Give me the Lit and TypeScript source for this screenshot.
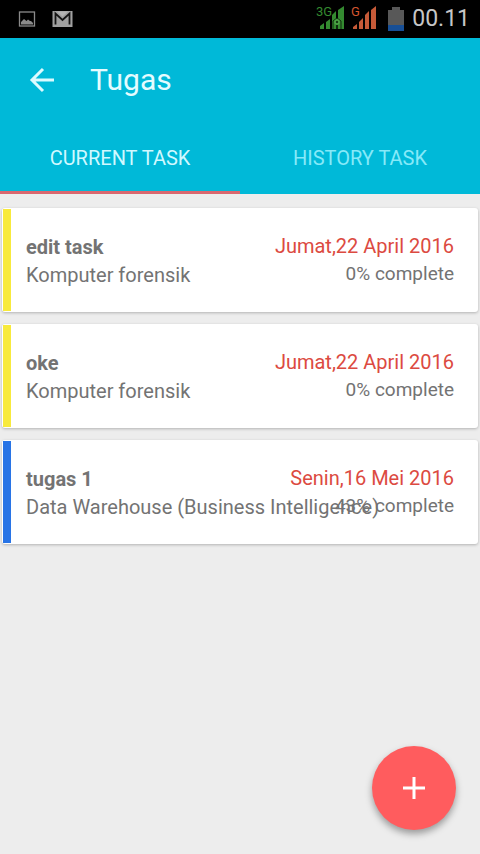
import { LitElement, html, css } from "lit";
import { customElement, property, state } from "lit/decorators.js";
import { classMap } from "lit/directives/class-map.js";

interface Task {
  title: string;
  course: string;
  due: string;
  progress: number;
  colour: "yellow" | "blue";
}

const TASKS: Task[] = [
  { title: "edit task", course: "Komputer forensik", due: "Jumat,22 April 2016", progress: 0, colour: "yellow" },
  { title: "oke", course: "Komputer forensik", due: "Jumat,22 April 2016", progress: 0, colour: "yellow" },
  { title: "tugas 1", course: "Data Warehouse (Business Intelligence)", due: "Senin,16 Mei 2016", progress: 43, colour: "blue" },
];

@customElement("status-bar")
class StatusBar extends LitElement {
  static styles = css`
    :host {
      display: flex;
      align-items: center;
      height: 38px;
      padding: 0 10px 0 18px;
      background: #000;
      color: #c6c6c6;
    }
    svg { display: block; }
    .notices { display: flex; align-items: center; gap: 16px; flex: 1; }
    .system { display: flex; align-items: center; }
    .signals { display: flex; gap: 6px; }
    .battery { margin: 0 8px 0 10px; }
    .net { font: 13px Roboto, sans-serif; }
    time { font: 23px/40px Roboto, sans-serif; }
  `;

  render() {
    return html`
      <div class="notices">
        <svg width="18" height="16" viewBox="0 0 18 16" aria-label="Image">
          <rect x="1.5" y="1" width="15" height="14" fill="none" stroke="#8a8a8a" stroke-width="1.3" />
          <path d="M3 13.500V11l3-3 2.500 2 1.500-1.500 2 1.500 1 0 2 2v1.500z" fill="#8a8a8a" />
        </svg>
        <svg width="21" height="16" viewBox="0 0 21 16" aria-label="Mail">
          <rect x="0.500" y="0" width="20" height="16" fill="#a0a0a0" />
          <path d="M3.500 13.500V2.500l7 6.500 7-6.500V13.500" fill="none" stroke="#151515" stroke-width="1.800" />
          <path d="M5 .5h11l-5.500 5z" fill="#b4b4b4" />
        </svg>
      </div>
      <div class="system">
        <div class="signals">
          <svg width="29" height="28" viewBox="0 0 29 28" aria-label="3G signal">
            <path d="M4 24v-3l4-3v6zM10 24v-7l4-3v10zM16 24V10l4-4v18zM22 24V5l6-4v23z" fill="#348a30" />
            <path d="M17 24v-8l4-3 4 3v8" fill="#348a30" stroke="#102a0f" stroke-width="1" />
            <circle cx="21" cy="17" r="2" fill="#173c15" stroke="#4ea548" stroke-width="1.500" />
            <path d="M21 20v4" stroke="#102a0f" stroke-width="2" />
            <text class="net" x="0" y="11" fill="#348a30">3G</text>
          </svg>
          <svg width="27" height="28" viewBox="0 0 27 28" aria-label="G signal">
            <path d="M2 24v-2l4-3v5zM8 24v-7l4-4v11zM14 24V10l4-4v18zM20 24V5l5-4v23z" fill="#c65a38" />
            <text class="net" x="0" y="11" fill="#d4552f">G</text>
          </svg>
        </div>
        <svg class="battery" width="16" height="24" viewBox="0 0 16 24" aria-label="Battery">
          <path d="M4 0h8v3h4v21H0V3h4z" fill="#585858" />
          <rect y="18" width="16" height="6" fill="#174f96" />
        </svg>
        <time>00.11</time>
      </div>
    `;
  }
}

@customElement("task-card")
class TaskCard extends LitElement {
  @property({ attribute: false }) task!: Task;

  static styles = css`
    :host { display: block; }
    .card {
      display: flex;
      box-sizing: border-box;
      min-height: 104px;
      padding: 1px;
      background: #fff;
      border-radius: 3px;
      box-shadow: 0 1px 3px rgba(0, 0, 0, 0.25);
      color: #737373;
      font: 20px/28px Roboto, sans-serif;
    }
    .stripe { width: 8px; }
    .yellow { background: #f8ea3c; }
    .blue { background: #2874e6; }
    .body {
      flex: 1;
      display: grid;
      grid-template-columns: minmax(0, 1fr);
      align-items: center;
      padding: 0 23px 0 15px;
      white-space: nowrap;
    }
    .body > * { grid-area: 1 / 1; }
    h2, p { margin: 0; font-size: 20px; }
    .subject { padding-top: 2px; }
    .meta { text-align: right; line-height: 27px; }
    .meta .done { font-size: 19px; }
    .meta .due { color: #dc4a41; }
  `;

  render() {
    const { title, course, due, progress, colour } = this.task;
    return html`
      <article class="card">
        <div class=${classMap({ stripe: true, [colour]: true })}></div>
        <div class="body">
          <div class="subject">
            <h2>${title}</h2>
            <p>${course}</p>
          </div>
          <div class="meta">
            <p class="due">${due}</p>
            <p class="done">${progress}% complete</p>
          </div>
        </div>
      </article>
    `;
  }
}

@customElement("app-root")
class AppRoot extends LitElement {
  @state() private tab = 0;

  static styles = css`
    :host {
      display: flex;
      flex-direction: column;
      min-height: 100vh;
      background: #ededed;
      font-family: Roboto, sans-serif;
    }
    svg { display: block; }
    button {
      border: 0;
      padding: 0;
      background: none;
      color: inherit;
      font: inherit;
      cursor: pointer;
    }
    header { background: #00b9d8; color: #e4fcff; }
    .toolbar {
      display: flex;
      align-items: center;
      gap: 34px;
      height: 84px;
      padding: 0 28px;
    }
    h1 { margin: 0; font-size: 30px; line-height: 36px; font-weight: 400; }
    .tabs { display: grid; grid-template-columns: 1fr 1fr; height: 72px; }
    .tab {
      padding-top: 3px;
      border-bottom: 3px solid transparent;
      color: #86e9f8;
      font-size: 20px;
    }
    .tab.active { color: #d0f8ff; border-color: #d9686f; }
    main {
      display: flex;
      flex-direction: column;
      gap: 12px;
      padding: 14px 2px;
    }
    .fab {
      position: fixed;
      right: 24px;
      bottom: 24px;
      display: grid;
      place-items: center;
      width: 84px;
      height: 84px;
      border-radius: 50%;
      background: #ff5c5e;
      box-shadow: 0 4px 7px rgba(0, 0, 0, 0.35);
    }
  `;

  render() {
    return html`
      <status-bar></status-bar>
      <header>
        <div class="toolbar">
          <button aria-label="Back">
            <svg width="28" height="28" viewBox="0 0 28 28" fill="none" stroke="#dcfbff" stroke-width="3">
              <path d="M26 14H4M15 3L4 14l11 11" />
            </svg>
          </button>
          <h1>Tugas</h1>
        </div>
        <nav class="tabs" role="tablist">
          ${["CURRENT TASK", "HISTORY TASK"].map(
            (label, i) => html`
              <button
                role="tab"
                aria-selected=${this.tab === i}
                class=${classMap({ tab: true, active: this.tab === i })}
                @click=${() => (this.tab = i)}
              >${label}</button>
            `
          )}
        </nav>
      </header>
      <main>
        ${this.tab === 0 ? TASKS.map((task) => html`<task-card .task=${task}></task-card>`) : ""}
      </main>
      <button class="fab" aria-label="Add task">
        <svg width="22" height="22" viewBox="0 0 22 22" stroke="#fff" stroke-width="3">
          <path d="M11 0v22M0 11h22" />
        </svg>
      </button>
    `;
  }
}
